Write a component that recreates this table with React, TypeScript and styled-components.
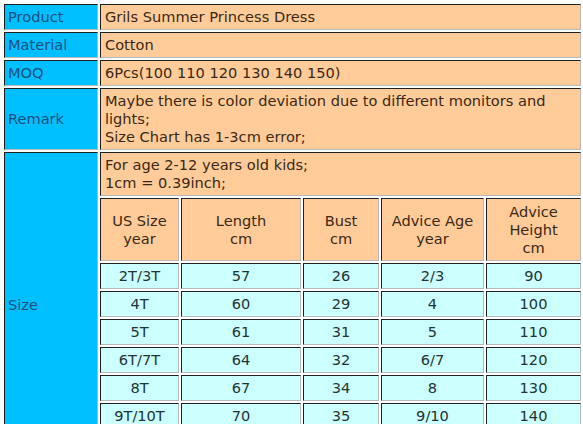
import React from "react";
import styled, { createGlobalStyle } from "styled-components";

const GlobalStyle = createGlobalStyle`
  body {
    margin: 0;
    background: #fff;
    font-family: "DejaVu Sans", Verdana, sans-serif;
    font-size: 14.6px;
    line-height: 18px;
  }
`;

const Sheet = styled.div`
  display: grid;
  grid-template-columns: 94px 79px 120px 76px 103px 95px;
  gap: 2px;
  padding: 4px 0 0 4px;
`;

const Cell = styled.div<{ $rows?: number }>`
  box-sizing: border-box;
  border: 1px solid;
  border-color: #202020 #b8b8b8 #b8b8b8 #202020;
  padding: 3px 3px;
  ${(p) => (p.$rows ? `grid-row: span ${p.$rows};` : "")}
`;

const Label = styled(Cell)`
  background: #00bfff;
  color: #17507e;
  display: flex;
  align-items: center;
`;

const Value = styled(Cell)`
  grid-column: span 5;
  background: #ffcc99;
  color: #3a2816;
  padding-left: 4px;
`;

const Head = styled(Cell)`
  background: #ffcc99;
  color: #3a2816;
  display: flex;
  align-items: center;
  justify-content: center;
  text-align: center;
  padding: 3.5px 3px;
`;

const Data = styled(Cell)`
  background: #ccffff;
  color: #1f3434;
  text-align: center;
`;

const sizes = [
  ["2T/3T", "57", "26", "2/3", "90"],
  ["4T", "60", "29", "4", "100"],
  ["5T", "61", "31", "5", "110"],
  ["6T/7T", "64", "32", "6/7", "120"],
  ["8T", "67", "34", "8", "130"],
  ["9T/10T", "70", "35", "9/10", "140"],
  ["11T/12T", "73", "37", "11/12", "150"],
];

const heads = [
  ["US Size", "year"],
  ["Length", "cm"],
  ["Bust", "cm"],
  ["Advice Age", "year"],
  ["Advice", "Height", "cm"],
];

export default function App() {
  return (
    <>
      <GlobalStyle />
      <Sheet>
        <Label>Product</Label>
        <Value>Grils Summer Princess Dress</Value>
        <Label>Material</Label>
        <Value>Cotton</Value>
        <Label>MOQ</Label>
        <Value>6Pcs(100 110 120 130 140 150)</Value>
        <Label>Remark</Label>
        <Value>
          Maybe there is color deviation due to different monitors and lights;
          <br />
          Size Chart has 1-3cm error;
        </Value>
        <Label $rows={2 + sizes.length}>Size</Label>
        <Value>
          For age 2-12 years old kids;
          <br />
          1cm = 0.39inch;
        </Value>
        {heads.map((h, i) => (
          <Head key={i}>
            <div>
              {h.map((line, j) => (
                <div key={j}>{line}</div>
              ))}
            </div>
          </Head>
        ))}
        {sizes.map((row) =>
          row.map((v, i) => <Data key={row[0] + i}>{v}</Data>)
        )}
      </Sheet>
    </>
  );
}
